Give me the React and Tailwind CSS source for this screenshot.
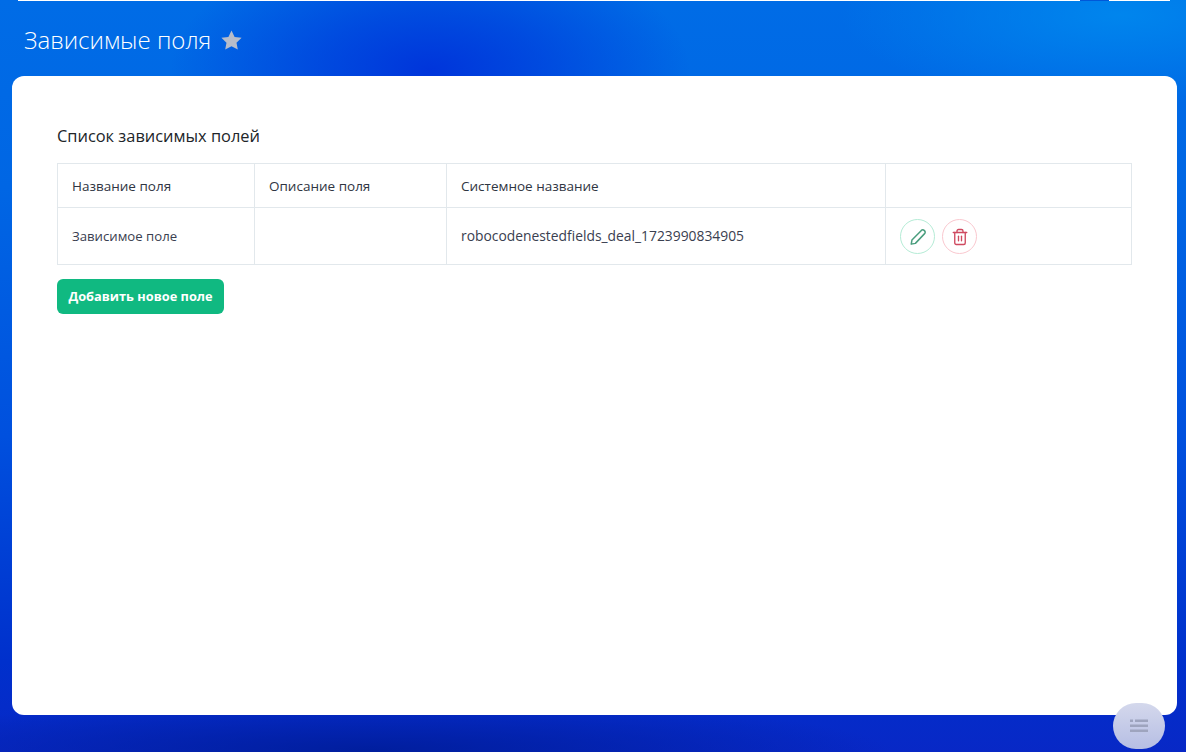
import React from 'react';
import { Trash2 } from 'lucide-react';

const Cell = ({ className = '', children }) => (
  <td className={`border border-[#e2e8ec] px-[14px] pt-[1px] align-middle ${className}`}>{children}</td>
);

const App = () => {
  return (
    <div className="relative h-[752px] w-[1186px] overflow-hidden font-['Open_Sans',sans-serif] bg-[radial-gradient(ellipse_260px_130px_at_430px_70px,rgba(0,50,218,0.95)_0%,rgba(0,50,218,0.55)_45%,rgba(0,50,218,0)_100%),radial-gradient(ellipse_280px_90px_at_1120px_15px,rgba(0,136,238,0.9)_0%,rgba(0,136,238,0)_100%),radial-gradient(ellipse_520px_50px_at_370px_750px,#001e9e_0%,rgba(0,30,158,0)_100%),linear-gradient(180deg,#006ce6_0%,#0066e4_25%,#0050de_58%,#0030cc_88%,#0828c6_100%)]">
      {/* top strip of the header above */}
      <div className="flex h-px pl-[18px]">
        <div className="w-[1062px] bg-white" />
        <div className="w-[29px] bg-[#0058d8]" />
        <div className="w-[61px] bg-white" />
      </div>

      <div className="flex h-[75px] items-center gap-[10px] pt-[3px] pl-[24px]">
        <h1 className="text-[24px] font-light leading-none text-white">Зависимые поля</h1>
        <svg width="21" height="20" viewBox="0 0 21 20" fill="#b6bcca">
          <polygon points="10.5,0.5 13.6,6.9 20.6,7.8 15.5,12.7 16.8,19.6 10.5,16.3 4.2,19.6 5.5,12.7 0.4,7.8 7.4,6.9" />
        </svg>
      </div>

      <main className="ml-[12px] mr-[9px] h-[639px] rounded-[12px] bg-white px-[45px] pt-[49px]">
        <h2 className="mb-[16px] text-[16.4px] leading-[22px] text-[#212529]">Список зависимых полей</h2>

        <table className="w-[1075px] table-fixed border-collapse text-[13.2px] text-[#3a4050]">
          <colgroup>
            <col className="w-[197px]" />
            <col className="w-[192px]" />
            <col className="w-[439px]" />
            <col />
          </colgroup>
          <thead>
            <tr className="h-[44px] text-left text-[13.5px] font-medium text-[#2f3542]">
              <Cell className="pt-[2px]">Название поля</Cell>
              <Cell className="pt-[2px]">Описание поля</Cell>
              <Cell className="pt-[2px]">Системное название</Cell>
              <Cell />
            </tr>
          </thead>
          <tbody>
            <tr className="h-[57px]">
              <Cell>Зависимое поле</Cell>
              <Cell />
              <Cell><span className="text-[13.85px]">robocodenestedfields_deal_1723990834905</span></Cell>
              <Cell>
                <div className="flex gap-[7px]">
                  <button className="flex h-[35px] w-[35px] items-center justify-center rounded-full border border-[#b5ecd6] text-[#4a9e7e]">
                    <svg width="18" height="18" viewBox="0 0 24 24" fill="none" stroke="currentColor" strokeWidth="2" strokeLinejoin="round">
                      <path d="M16.5 3.2a2.6 2.6 0 0 1 3.7 0l.6.6a2.6 2.6 0 0 1 0 3.7L8.5 20.5l-5.5 1 .9-5.4z" />
                    </svg>
                  </button>
                  <button className="flex h-[35px] w-[35px] items-center justify-center rounded-full border border-[#fac8cf] text-[#cf4a60]">
                    <Trash2 className="h-[18px] w-[18px]" strokeWidth={1.8} />
                  </button>
                </div>
              </Cell>
            </tr>
          </tbody>
        </table>

        <button className="mt-[14px] h-[35px] w-[167px] rounded-[6px] bg-[#10b981] text-[12.8px] font-bold text-white">
          Добавить новое поле
        </button>
      </main>

      {/* floating menu button */}
      <button className="absolute left-[1113px] top-[703px] flex h-[46px] w-[52px] items-center justify-center rounded-full bg-[linear-gradient(180deg,#d4d8ec,#b6bee4)]">
        <svg width="18" height="14" viewBox="0 0 18 14" fill="#9ea4be">
          <rect x="0" y="0.5" width="3" height="2.5" />
          <rect x="5" y="0.5" width="13" height="2.5" />
          <rect x="0" y="5.5" width="18" height="2.5" />
          <rect x="0" y="10.5" width="18" height="2.5" />
        </svg>
      </button>
    </div>
  );
};

export default App;
